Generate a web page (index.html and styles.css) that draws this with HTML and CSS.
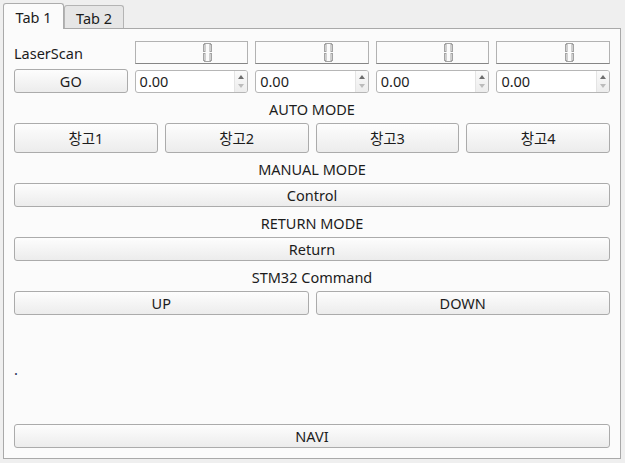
FILE: index.html
```html
<!DOCTYPE html>
<html>
<head>
<meta charset="utf-8">
<link rel="stylesheet" href="styles.css">
</head>
<body>
<div class="tabbar">
  <div class="tab tab-active">Tab 1</div>
  <div class="tab">Tab 2</div>
</div>
<div class="pane">
  <div class="grid5">
    <div class="lbl">LaserScan</div>
    <div class="lcd"><svg class="digit" width="9" height="19" viewBox="0 0 9 19"><g fill="none" stroke="#a3a3a3" stroke-width="1"><line x1="1" y1="0.5" x2="8" y2="0.5"/><rect x="0.5" y="1.5" width="1.5" height="7"/><rect x="7" y="1.5" width="1.5" height="7"/><rect x="0.5" y="10.5" width="1.5" height="7"/><rect x="7" y="10.5" width="1.5" height="7"/><line x1="1" y1="18.5" x2="8" y2="18.5"/></g></svg></div>
    <div class="lcd"><svg class="digit" width="9" height="19" viewBox="0 0 9 19"><g fill="none" stroke="#a3a3a3" stroke-width="1"><line x1="1" y1="0.5" x2="8" y2="0.5"/><rect x="0.5" y="1.5" width="1.5" height="7"/><rect x="7" y="1.5" width="1.5" height="7"/><rect x="0.5" y="10.5" width="1.5" height="7"/><rect x="7" y="10.5" width="1.5" height="7"/><line x1="1" y1="18.5" x2="8" y2="18.5"/></g></svg></div>
    <div class="lcd"><svg class="digit" width="9" height="19" viewBox="0 0 9 19"><g fill="none" stroke="#a3a3a3" stroke-width="1"><line x1="1" y1="0.5" x2="8" y2="0.5"/><rect x="0.5" y="1.5" width="1.5" height="7"/><rect x="7" y="1.5" width="1.5" height="7"/><rect x="0.5" y="10.5" width="1.5" height="7"/><rect x="7" y="10.5" width="1.5" height="7"/><line x1="1" y1="18.5" x2="8" y2="18.5"/></g></svg></div>
    <div class="lcd"><svg class="digit" width="9" height="19" viewBox="0 0 9 19"><g fill="none" stroke="#a3a3a3" stroke-width="1"><line x1="1" y1="0.5" x2="8" y2="0.5"/><rect x="0.5" y="1.5" width="1.5" height="7"/><rect x="7" y="1.5" width="1.5" height="7"/><rect x="0.5" y="10.5" width="1.5" height="7"/><rect x="7" y="10.5" width="1.5" height="7"/><line x1="1" y1="18.5" x2="8" y2="18.5"/></g></svg></div>
    <button class="btn">GO</button>
    <div class="spin"><span class="spin-val">0.00</span><span class="spin-arrows"><i class="arr-up"></i><i class="arr-down"></i></span></div>
    <div class="spin"><span class="spin-val">0.00</span><span class="spin-arrows"><i class="arr-up"></i><i class="arr-down"></i></span></div>
    <div class="spin"><span class="spin-val">0.00</span><span class="spin-arrows"><i class="arr-up"></i><i class="arr-down"></i></span></div>
    <div class="spin"><span class="spin-val">0.00</span><span class="spin-arrows"><i class="arr-up"></i><i class="arr-down"></i></span></div>
  </div>

  <div class="sec">AUTO MODE</div>
  <div class="row4">
    <button class="btn btn-tall">창고1</button>
    <button class="btn btn-tall">창고2</button>
    <button class="btn btn-tall">창고3</button>
    <button class="btn btn-tall">창고4</button>
  </div>

  <div class="sec">MANUAL MODE</div>
  <button class="btn btn-wide">Control</button>

  <div class="sec">RETURN MODE</div>
  <button class="btn btn-wide">Return</button>

  <div class="sec">STM32 Command</div>
  <div class="row2">
    <button class="btn">UP</button>
    <button class="btn">DOWN</button>
  </div>

  <div class="dot">.</div>

  <button class="btn btn-wide btn-navi">NAVI</button>
</div>
</body>
</html>
```

FILE: styles.css
```css
html, body {
  margin: 0;
  padding: 0;
}
body {
  width: 625px;
  height: 463px;
  overflow: hidden;
  background: #efefef;
  font-family: "Noto Sans", "Noto Sans CJK KR", sans-serif;
  font-size: 14.5px;
  color: #1c1c1c;
}

.tabbar {
  display: flex;
  align-items: flex-end;
  height: 29px;
  padding-left: 3px;
  position: relative;
  z-index: 1;
  box-sizing: border-box;
}
.tab {
  box-sizing: border-box;
  width: 60px;
  height: 23px;
  margin-bottom: 1px;
  border: 1px solid #b4b4b4;
  border-bottom: none;
  border-radius: 3px 3px 0 0;
  background: #e6e6e6;
  display: flex;
  align-items: center;
  justify-content: center;
  padding-top: 2px;
}
.tab-active {
  width: 61px;
  height: 26px;
  margin-bottom: 0;
  background: #fbfbfb;
  border-color: #acacac;
  padding-top: 0;
}

.pane {
  box-sizing: border-box;
  margin: -1px 0 0 3px;
  width: 618px;
  height: 431px;
  border: 1px solid #a9a9a9;
  background: #fbfbfb;
  padding: 12px 10px 10px 10px;
  display: flex;
  flex-direction: column;
}

.grid5 {
  display: grid;
  grid-template-columns: repeat(5, 1fr);
  grid-template-rows: 23px 24px;
  column-gap: 7px;
  row-gap: 5px;
}
.lbl {
  display: flex;
  align-items: center;
}
.lcd {
  box-sizing: border-box;
  border: 1px solid #b2b2b2;
  border-bottom-color: #858585;
  display: flex;
  align-items: center;
  justify-content: flex-end;
  padding-right: 35px;
}
.digit {
  display: block;
}

.btn {
  box-sizing: border-box;
  margin: 0;
  padding: 0;
  height: 24px;
  border: 1px solid #ababab;
  border-radius: 3px;
  background: linear-gradient(#fdfdfd, #ececec);
  font: inherit;
  color: inherit;
  line-height: 20px;
  text-align: center;
}
.btn-tall {
  height: 30px;
}
.btn-wide {
  width: 100%;
}

.spin {
  box-sizing: border-box;
  height: 23px;
  align-self: end;
  display: flex;
  border: 1px solid #b6b6b6;
  border-radius: 3px;
  background: #ffffff;
}
.spin-val {
  flex: 1;
  padding-left: 4px;
  line-height: 21px;
}
.spin-arrows {
  width: 12px;
  border-left: 1px solid #e4e4e4;
  border-radius: 0 2px 2px 0;
  background: linear-gradient(#fafafa, #ededed);
  display: flex;
  flex-direction: column;
  align-items: center;
  justify-content: center;
  gap: 5px;
}
.arr-up {
  width: 0;
  height: 0;
  border-left: 3.5px solid transparent;
  border-right: 3.5px solid transparent;
  border-bottom: 4px solid #6e6e6e;
}
.arr-down {
  width: 0;
  height: 0;
  border-left: 3.5px solid transparent;
  border-right: 3.5px solid transparent;
  border-top: 4px solid #bcbcbc;
}

.sec {
  height: 20px;
  line-height: 20px;
  text-align: center;
  margin-top: 6px;
  margin-bottom: 4px;
}
.row4 {
  display: grid;
  grid-template-columns: repeat(4, 1fr);
  column-gap: 7px;
}
.row2 {
  display: grid;
  grid-template-columns: repeat(2, 1fr);
  column-gap: 7px;
}
.dot {
  margin-top: 44px;
  height: 20px;
  line-height: 20px;
  color: #1a2e55;
}
.btn-navi {
  margin-top: auto;
}
```
